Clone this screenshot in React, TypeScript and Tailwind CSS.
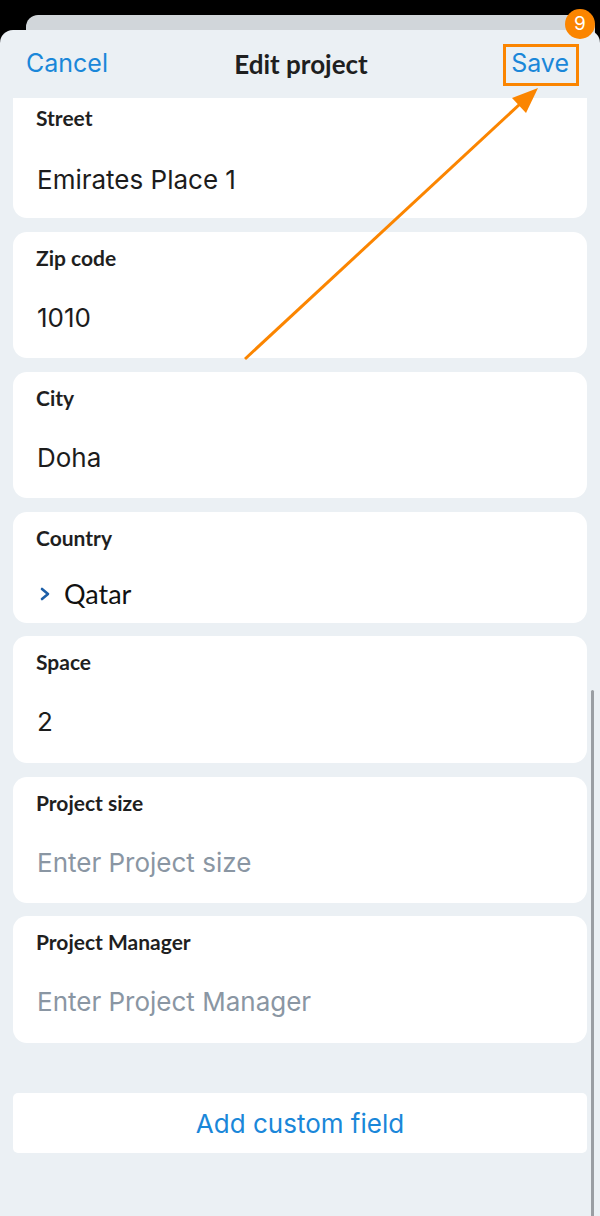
import React from "react";

const lato = { fontFamily: "Lato, 'Noto Sans', sans-serif" } as React.CSSProperties;
const inter = { fontFamily: "Inter, 'Noto Sans', sans-serif" } as React.CSSProperties;

function Field({
  label,
  value,
  placeholder,
  chevron,
  first,
  h,
  extra = "",
}: {
  label: string;
  value?: string;
  placeholder?: string;
  chevron?: boolean;
  first?: boolean;
  h: string;
  extra?: string;
}) {
  return (
    <div
      className={`bg-white ${first ? "rounded-b-[14px]" : "rounded-[14px]"} ${h} ${extra} px-[23px] flex flex-col`}
    >
      <div
        className={`${first ? "pt-[7px]" : "pt-[13px]"} text-[21px] font-bold text-[#1f1f1f] leading-[26px]`}
        style={lato}
      >
        {label}
      </div>
      {chevron ? (
        <div className="flex items-center mt-[27px]">
          <svg width="14" height="16" viewBox="0 0 14 16" className="ml-[2px] mr-[12px]">
            <path d="M4 3 L10 8 L4 13" fill="none" stroke="#1d5fa8" strokeWidth="2.6" strokeLinecap="round" strokeLinejoin="round" />
          </svg>
          <span className="text-[27px] leading-[32px] text-[#111]" style={lato}>
            {value}
          </span>
        </div>
      ) : (
        <div
          className={`${first ? "mt-[33px]" : "mt-[31px]"} pl-[1px] text-[26px] leading-[32px] ${value ? "text-[#1c1c1c]" : "text-[#8a96a3]"}`}
          style={inter}
        >
          {value ?? placeholder}
        </div>
      )}
    </div>
  );
}

export default function App() {
  return (
    <div className="relative w-[600px] h-[1216px] bg-black overflow-hidden">
      <div className="pt-[15px]">
        <div className="ml-[26px] mr-[5px] h-[22px] bg-[#d1d6da] rounded-t-[12px]" />
        <div className="-mt-[7px] h-[1200px] bg-[#ebf0f4] rounded-t-[13px]">
          <div className="h-[68px] flex items-center pl-[26px] pr-[31px]" style={inter}>
            <div className="flex-1">
              <span className="text-[25px] text-[#1a87d9]">Cancel</span>
            </div>
            <span className="text-[26px] font-bold text-[#1f1f1f] ml-[7px]" style={lato}>
              Edit project
            </span>
            <div className="flex-1 flex justify-end">
              <span className="text-[25px] text-[#1a87d9]">Save</span>
            </div>
          </div>
          <div className="px-[13px] flex flex-col">
            <Field first label="Street" value="Emirates Place 1" h="h-[120px]" />
            <Field label="Zip code" value="1010" h="h-[126px]" extra="mt-[14px]" />
            <Field label="City" value="Doha" h="h-[126px]" extra="mt-[14px]" />
            <Field label="Country" value="Qatar" chevron h="h-[111px]" extra="mt-[14px]" />
            <Field label="Space" value="2" h="h-[127px]" extra="mt-[13px]" />
            <Field label="Project size" placeholder="Enter Project size" h="h-[126px]" extra="mt-[14px]" />
            <Field label="Project Manager" placeholder="Enter Project Manager" h="h-[127px]" extra="mt-[13px]" />
            <div
              className="mt-[50px] h-[60px] bg-white rounded-[5px] flex items-center justify-center text-[26px] text-[#1a87d9]"
              style={inter}
            >
              Add custom field
            </div>
          </div>
        </div>
      </div>

      {/* scrollbar */}
      <div className="absolute left-[591px] top-[690px] w-[3px] h-[540px] rounded-full bg-[#9a9ea3]" />

      {/* highlight box */}
      <div className="absolute left-[503px] top-[44px] w-[76px] h-[42px] border-[3px] border-[#fb8500]" />

      {/* badge */}
      <div
        className="absolute left-[565px] top-[9px] w-[30px] h-[30px] rounded-full bg-[#fb8500] text-white flex items-center justify-center text-[19px]"
        style={inter}
      >
        9
      </div>

      {/* arrow */}
      <svg className="absolute left-0 top-0" width="600" height="400" viewBox="0 0 600 400">
        <line x1="245" y1="359" x2="520" y2="104" stroke="#fb8500" strokeWidth="3" />
        <polygon points="538,88 526,113 512,98" fill="#fb8500" />
      </svg>
    </div>
  );
}
